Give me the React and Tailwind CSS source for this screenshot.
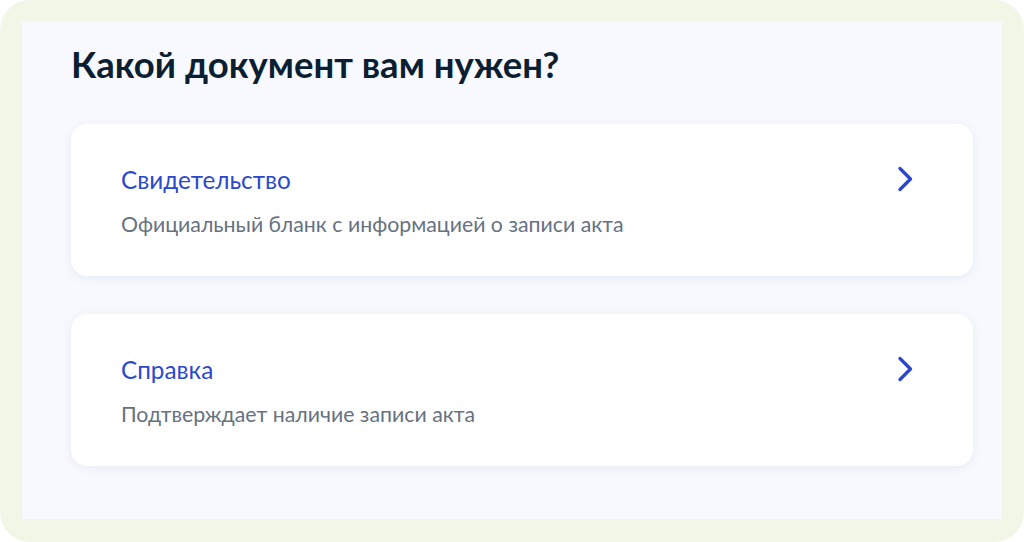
import React from "react";

function Chevron() {
  return (
    <svg width="17" height="26" viewBox="0 0 17 26" fill="none" className="shrink-0">
      <path d="M3 2.5L13.5 13L3 23.5" stroke="#2a46cc" strokeWidth="3.3" strokeLinecap="round" strokeLinejoin="round" />
    </svg>
  );
}

function Card({ title, text }) {
  return (
    <div className="flex h-[152px] items-start justify-between rounded-[16px] bg-white pl-[50px] pr-[59px] pt-[42px] shadow-[0_2px_10px_rgba(110,130,180,0.12)]">
      <div className="flex flex-col">
        <div className="text-[24.3px] leading-[28px] text-[#2b4acb]">{title}</div>
        <div className="mt-[18px] text-[21.3px] leading-[24px] text-[#66727f]">{text}</div>
      </div>
      <div>
        <Chevron />
      </div>
    </div>
  );
}

export default function App() {
  return (
    <div className="h-[542px] w-[1024px] bg-white" style={{ fontFamily: "Lato, 'Noto Sans', sans-serif" }}>
      <div className="h-full w-full rounded-[30px] bg-[#f2f6e6] pl-[22px] pr-[22px] pt-[22px] pb-[23px]">
        <div className="h-full bg-[#f8f9fe] pl-[49px] pr-[29px] pt-[20px]">
          <h1 className="text-[36.5px] font-bold leading-[44px] text-[#0b1f33]">Какой документ вам нужен?</h1>
          <div className="mt-[38px] flex flex-col gap-[38px]">
            <Card title="Свидетельство" text="Официальный бланк с информацией о записи акта" />
            <Card title="Справка" text="Подтверждает наличие записи акта" />
          </div>
        </div>
      </div>
    </div>
  );
}
